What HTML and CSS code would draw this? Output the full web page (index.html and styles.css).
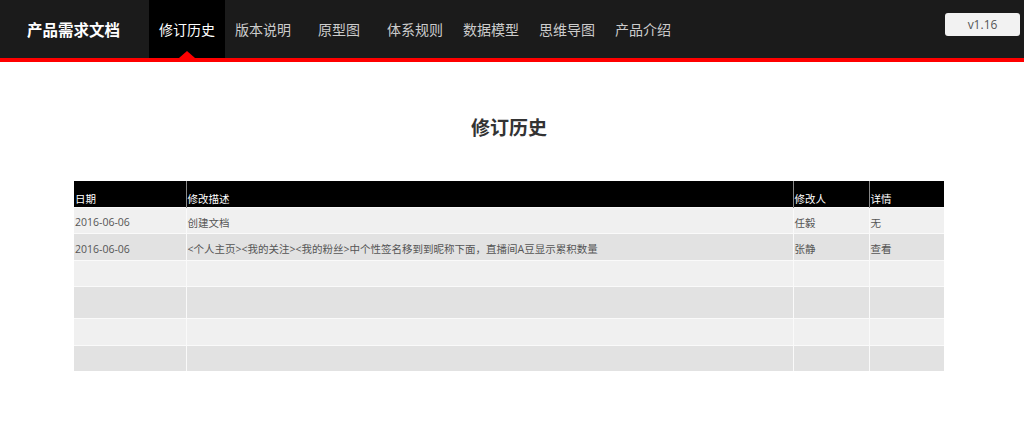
FILE: index.html
```html
<!DOCTYPE html>
<html lang="zh-CN">

<head>
    <meta charset="UTF-8">
    <meta name="viewport" content="width=device-width, initial-scale=1.0">
    <title>产品需求文档 - 修订历史</title>
    <link rel="stylesheet" href="styles.css">
</head>

<body>
    <div class="topbar">
        <div class="logo">产品需求文档</div>
        <ul class="nav">
            <li class="active">修订历史</li>
            <li>版本说明</li>
            <li>原型图</li>
            <li>体系规则</li>
            <li>数据模型</li>
            <li>思维导图</li>
            <li>产品介绍</li>
        </ul>
        <div class="version">v1.16</div>
    </div>

    <div class="content">
        <h1>修订历史</h1>

        <table class="history">
            <thead>
                <tr>
                    <th class="col-date">日期</th>
                    <th>修改描述</th>
                    <th class="col-who">修改人</th>
                    <th class="col-more">详情</th>
                </tr>
            </thead>
            <tbody>
                <tr>
                    <td>2016-06-06</td>
                    <td>创建文档</td>
                    <td>任毅</td>
                    <td>无</td>
                </tr>
                <tr class="mid">
                    <td>2016-06-06</td>
                    <td>&lt;个人主页&gt;&lt;我的关注&gt;&lt;我的粉丝&gt;中个性签名移到到昵称下面，直播间A豆显示累积数量</td>
                    <td>张静</td>
                    <td>查看</td>
                </tr>
                <tr><td></td><td></td><td></td><td></td></tr>
                <tr class="tall"><td></td><td></td><td></td><td></td></tr>
                <tr class="mid"><td></td><td></td><td></td><td></td></tr>
                <tr><td></td><td></td><td></td><td></td></tr>
            </tbody>
        </table>
    </div>
</body>

</html>
```

FILE: styles.css
```css
body {
    margin: 0;
    padding: 0;
    background-color: #fff;
    font-family: "Open Sans", "Noto Sans CJK SC", sans-serif;
}

/* top navigation */
.topbar {
    display: flex;
    align-items: center;
    height: 58px;
    background-color: #1b1b1b;
    border-bottom: 4px solid #f00;
}

.logo {
    width: 122px;
    padding-left: 27px;
    color: #fff;
    font-size: 15.5px;
    font-weight: bold;
}

.nav {
    display: flex;
    margin: 0;
    padding: 0;
    list-style: none;
    flex: 1;
    align-self: stretch;
}

.nav li {
    position: relative;
    width: 76px;
    display: flex;
    align-items: center;
    justify-content: center;
    color: #ccc;
    font-size: 14px;
}

.nav li.active {
    background-color: #000;
    color: #fff;
}

.nav li.active::after {
    content: "";
    position: absolute;
    left: 30px;
    bottom: 0;
    border-left: 8px solid transparent;
    border-right: 8px solid transparent;
    border-bottom: 7px solid #f00;
}

.version {
    width: 75px;
    height: 23px;
    line-height: 23px;
    margin-right: 4px;
    margin-bottom: 10px;
    border-radius: 3px;
    background-color: #f2f2f2;
    color: #555;
    font-size: 12px;
    text-align: center;
}

/* page body */
.content {
    width: 870px;
    margin-left: 74px;
}

h1 {
    margin: 52px 0 39px;
    color: #333;
    font-size: 19px;
    font-weight: bold;
    text-align: center;
    line-height: 28px;
}

.history {
    width: 870px;
    table-layout: fixed;
    border-collapse: collapse;
    font-size: 10.5px;
}

.history th {
    box-sizing: border-box;
    height: 26px;
    padding: 0 1px 1px;
    background-color: #000;
    color: #fff;
    font-weight: normal;
    text-align: left;
    vertical-align: bottom;
    border-left: 1px solid #888;
}

.history th:first-child {
    border-left: none;
}

.col-date {
    width: 112px;
}

.col-who {
    width: 76px;
}

.col-more {
    width: 75px;
}

.history td {
    box-sizing: border-box;
    height: 26px;
    padding: 4px 1px 0;
    color: #555;
    border-left: 1px solid #fafafa;
    border-top: 1px solid #fafafa;
}

.history td:first-child {
    border-left: none;
}

.history tbody tr:nth-child(odd) td {
    background-color: #f0f0f0;
}

.history tbody tr:nth-child(even) td {
    background-color: #e2e2e2;
}

.history tr.mid td {
    height: 27px;
}

.history tr.tall td {
    height: 32px;
}
```
